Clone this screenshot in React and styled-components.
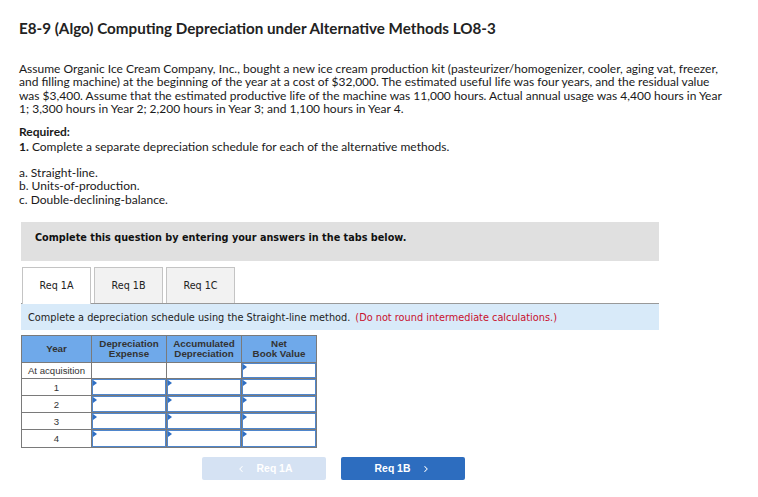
import styled, { createGlobalStyle } from "styled-components";
import { ChevronLeft, ChevronRight } from "lucide-react";

const GlobalStyle = createGlobalStyle`
  body {
    margin: 0;
    background: #fff;
    font-family: Lato, "Liberation Sans", sans-serif;
    color: #1a1a1a;
  }
`;

const Page = styled.div`
  padding: 19px 0 0 19px;
  width: 720px;
`;

const Title = styled.h1`
  margin: 0;
  font-size: 15.2px;
  line-height: 18px;
  font-weight: 700;
  color: #222;
`;

const Para = styled.p`
  margin: ${(p) => p.$mt || "0"} 0 0 0;
  font-size: 12px;
  line-height: 13.4px;
  white-space: nowrap;
`;

const Strong = styled.b`
  font-weight: 700;
`;

const Question = styled.div`
  margin: 16px 0 0 2px;
  width: 638px;
`;

const Banner = styled.div`
  background: #e0e0e0;
  height: 39px;
  padding: 10px 0 0 14px;
  box-sizing: border-box;
  font-family: "DejaVu Sans", Verdana, sans-serif;
  font-size: 9.7px;
  font-weight: 700;
  line-height: 12px;
  color: #111;
`;

const Tabs = styled.div`
  display: flex;
  gap: 3px;
  margin-top: 6px;
  padding-left: 1px;
  border-bottom: 1px solid #999;
`;

const Tab = styled.div`
  width: 69px;
  box-sizing: border-box;
  display: flex;
  align-items: center;
  justify-content: center;
  border: 1px solid #c4c4c4;
  border-bottom: none;
  margin-bottom: ${(p) => (p.$active ? "-1px" : "0")};
  height: ${(p) => (p.$active ? "37px" : "36px")};
  padding-bottom: ${(p) => (p.$active ? "1px" : "0")};
  background: ${(p) => (p.$active ? "#fff" : "#f2f2f2")};
  font-family: "DejaVu Sans", Verdana, sans-serif;
  font-size: 9.6px;
  color: #222;
`;

const Instruction = styled.div`
  background: #d8eaf9;
  height: 26px;
  padding-left: 7px;
  display: flex;
  align-items: center;
  font-family: "DejaVu Sans", Verdana, sans-serif;
  font-size: 9.75px;
  color: #222;
  white-space: nowrap;
`;

const Red = styled.span`
  color: #c8102e;
  margin-left: 5px;
`;

const Table = styled.table`
  margin-top: 5px;
  border-collapse: collapse;
  border: 1px solid #7a7a7a;
  font-family: "Liberation Sans", Arial, sans-serif;
  table-layout: fixed;
`;

const Head = styled.th`
  background: #6fa9ea;
  border: 1px solid #7a7a7a;
  width: ${(p) => p.$w}px;
  height: 26px;
  padding: 0;
  font-size: 9.8px;
  line-height: 10.5px;
  font-weight: 700;
  color: #333;
  text-align: center;
`;

const YearCell = styled.td`
  border: 1px solid #7a7a7a;
  height: ${(p) => p.$h}px;
  padding: 0;
  font-size: 9.6px;
  color: #333;
  text-align: center;
  white-space: nowrap;
`;

const Cell = styled.td`
  border: 1px solid #7a7a7a;
  height: ${(p) => p.$h}px;
  padding: 0;
  position: relative;
  background: #fff;
`;

const InputBox = styled.div`
  position: absolute;
  inset: 0;
  border: 1.5px solid #4f86cc;
  background: #fff;
`;

const Flag = styled.span`
  position: absolute;
  left: 0;
  top: 0;
  width: 0;
  height: 0;
  border-left: 4px solid #2f6fc4;
  border-top: 3px solid transparent;
  border-bottom: 3px solid transparent;
`;

const Nav = styled.div`
  display: flex;
  gap: 15px;
  margin: 9px 0 0 183px;
`;

const NavButton = styled.div`
  width: 124px;
  height: 23px;
  display: flex;
  align-items: center;
  justify-content: center;
  gap: 11px;
  border-radius: 2px;
  background: ${(p) => (p.$disabled ? "#d5e2f3" : "#2d6dbf")};
  color: #fff;
  font-family: "Liberation Sans", Arial, sans-serif;
  font-size: 10.4px;
  font-weight: 700;
`;

const rows = [
  { year: "At acquisition", h: 15, inputs: [false, false, true] },
  { year: "1", h: 16, inputs: [true, true, true] },
  { year: "2", h: 16, inputs: [true, true, true] },
  { year: "3", h: 16, inputs: [true, true, true] },
  { year: "4", h: 17, inputs: [true, true, true] },
];

function Input() {
  return (
    <InputBox>
      <Flag />
    </InputBox>
  );
}

export default function App() {
  return (
    <>
      <GlobalStyle />
      <Page>
        <Title>E8-9 (Algo) Computing Depreciation under Alternative Methods LO8-3</Title>
        <Para $mt="25px">
          Assume Organic Ice Cream Company, Inc., bought a new ice cream production kit (pasteurizer/homogenizer, cooler, aging vat, freezer,
          <br />
          and filling machine) at the beginning of the year at a cost of $32,000. The estimated useful life was four years, and the residual value
          <br />
          was $3,400. Assume that the estimated productive life of the machine was 11,000 hours. Actual annual usage was 4,400 hours in Year
          <br />
          1; 3,300 hours in Year 2; 2,200 hours in Year 3; and 1,100 hours in Year 4.
        </Para>
        <Para $mt="9px">
          <Strong>Required:</Strong>
        </Para>
        <Para $mt="1.5px">
          <Strong>1.</Strong> Complete a separate depreciation schedule for each of the alternative
          methods.
        </Para>
        <Para $mt="13px">
          a. Straight-line.
          <br />
          b. Units-of-production.
          <br />
          c. Double-declining-balance.
        </Para>

        <Question>
          <Banner>Complete this question by entering your answers in the tabs below.</Banner>
          <Tabs>
            <Tab $active>Req 1A</Tab>
            <Tab>Req 1B</Tab>
            <Tab>Req 1C</Tab>
          </Tabs>
          <Instruction>
            Complete a depreciation schedule using the Straight-line method.
            <Red>(Do not round intermediate calculations.)</Red>
          </Instruction>
          <Table>
            <thead>
              <tr>
                <Head $w={69}>Year</Head>
                <Head $w={74}>
                  Depreciation
                  <br />
                  Expense
                </Head>
                <Head $w={74}>
                  Accumulated
                  <br />
                  Depreciation
                </Head>
                <Head $w={74}>
                  Net
                  <br />
                  Book Value
                </Head>
              </tr>
            </thead>
            <tbody>
              {rows.map((r) => (
                <tr key={r.year}>
                  <YearCell $h={r.h}>{r.year}</YearCell>
                  {r.inputs.map((on, i) => (
                    <Cell key={i} $h={r.h}>
                      {on && <Input />}
                    </Cell>
                  ))}
                </tr>
              ))}
            </tbody>
          </Table>
        </Question>

        <Nav>
          <NavButton $disabled>
            <ChevronLeft size={10} strokeWidth={2.5} />
            Req 1A
          </NavButton>
          <NavButton>
            Req 1B
            <ChevronRight size={10} strokeWidth={2.5} />
          </NavButton>
        </Nav>
      </Page>
    </>
  );
}
